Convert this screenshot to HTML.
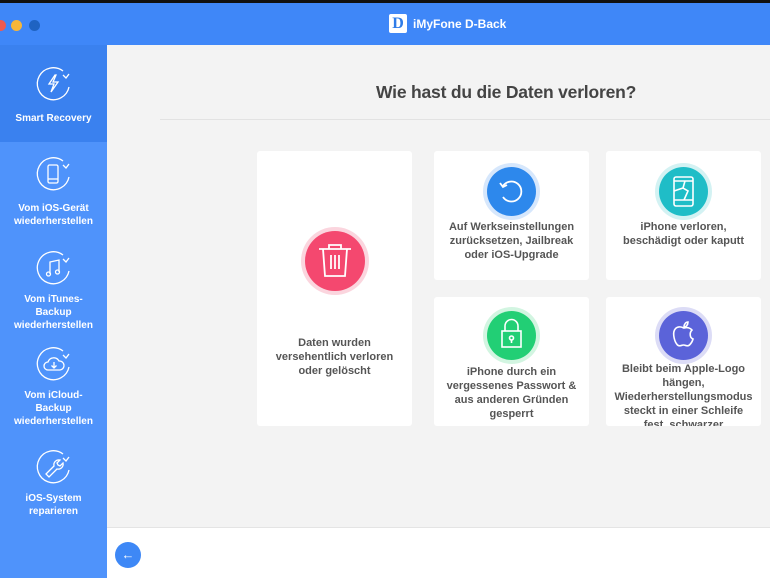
<!DOCTYPE html>
<html><head><meta charset="utf-8"><style>
*{margin:0;padding:0;box-sizing:border-box}
body{width:770px;height:578px;overflow:hidden;background:#f3f3f3;font-family:"Liberation Sans","DejaVu Sans",sans-serif;position:relative}
.top{position:absolute;left:0;top:0;width:770px;height:3px;background:#111}
.bar{position:absolute;left:0;top:3px;width:770px;height:42px;background:#3f87f8}
.dot{position:absolute;top:17px;width:11px;height:11px;border-radius:50%}
.side{position:absolute;left:0;top:45px;width:107px;height:533px;background:#4f93fb}
.sel{position:absolute;left:0;top:0;width:107px;height:97px;background:#3a81ef}
.item{position:absolute;left:0;width:107px;text-align:center;color:#fff;font-size:10px;font-weight:bold;line-height:13px}
.item svg{display:block;margin:0 auto 6px}
.card{position:absolute;background:#fff;border-radius:3px;text-align:center;color:#555;font-size:11px;font-weight:bold;line-height:14px}
.ic{position:absolute;border-radius:50%}
.bottom{position:absolute;left:107px;top:527px;width:663px;height:51px;background:#fff;border-top:1px solid #e4e4e4}
</style></head><body>
<div class="top"></div>
<div class="bar">
<div class="dot" style="left:-5px;background:#f05a50"></div>
<div class="dot" style="left:11px;background:#f6b63a"></div>
<div class="dot" style="left:29px;background:#1f63c2"></div>
<div style="position:absolute;left:389px;top:11px;width:18px;height:19px;background:#fff;border-radius:2px;color:#2f7ce8;font:bold 16px 'Liberation Serif',serif;text-align:center;line-height:19px">D</div>
<div style="position:absolute;left:413px;top:14px;color:#fff;font-size:12px;font-weight:bold">iMyFone D-Back</div>
</div>
<div class="side">
<div class="sel"></div>
<div class="item" style="top:20px"><svg width="38" height="38" viewBox="0 0 38 38" fill="none" stroke="#fff" stroke-width="1.3"><path d="M34 22A16 16 0 1 1 28 6"/><path d="M28 10l3 3 3-4" /><path d="M20 10l-6 9h5l-3 8 7-10h-5l3-7z"/></svg><span style="position:relative;top:3px">Smart Recovery</span></div>
<div class="item" style="top:110px"><svg width="38" height="38" viewBox="0 0 38 38" fill="none" stroke="#fff" stroke-width="1.3"><path d="M34 22A16 16 0 1 1 28 6"/><path d="M28 10l3 3 3-4"/><rect x="13" y="10" width="10" height="18" rx="1.5"/><path d="M13 24h10"/></svg><span style="position:relative;top:3px">Vom iOS-Gerät<br>wiederherstellen</span></div>
<div class="item" style="top:204px"><svg width="38" height="38" viewBox="0 0 38 38" fill="none" stroke="#fff" stroke-width="1.3"><path d="M34 22A16 16 0 1 1 28 6"/><path d="M28 10l3 3 3-4"/><path d="M15 25V13l9-2v12"/><circle cx="13.5" cy="25" r="2"/><circle cx="22.5" cy="23" r="2"/></svg>Vom iTunes-<br>Backup<br>wiederherstellen</div>
<div class="item" style="top:300px"><svg width="38" height="38" viewBox="0 0 38 38" fill="none" stroke="#fff" stroke-width="1.3"><path d="M34 22A16 16 0 1 1 28 6"/><path d="M28 10l3 3 3-4"/><path d="M13 25a4 4 0 0 1 0-8 6 6 0 0 1 11-1 4.5 4.5 0 0 1 1 9z"/><path d="M19 17v6M16.5 20.5l2.5 2.5 2.5-2.5"/></svg>Vom iCloud-<br>Backup<br>wiederherstellen</div>
<div class="item" style="top:403px"><svg width="38" height="38" viewBox="0 0 38 38" fill="none" stroke="#fff" stroke-width="1.3"><path d="M34 22A16 16 0 1 1 28 6"/><path d="M28 10l3 3 3-4"/><path d="M11 26l8-8a5 5 0 0 1 6-6l-3 3 1 2 2 1 3-3a5 5 0 0 1-6 6l-8 8z"/></svg>iOS-System<br>reparieren</div>
</div>
<div style="position:absolute;left:376px;top:82px;color:#444;font-size:17.5px;font-weight:bold;letter-spacing:-0.2px">Wie hast du die Daten verloren?</div>
<div style="position:absolute;left:160px;top:119px;width:610px;height:1px;background:#e2e2e2"></div>

<div class="card" style="left:257px;top:151px;width:155px;height:275px">
<div class="ic" style="left:44px;top:76px;width:68px;height:68px;background:#fbd5de"></div>
<div class="ic" style="left:48px;top:80px;width:60px;height:60px;background:#f4486f"></div>
<svg style="position:absolute;left:60px;top:92px" width="36" height="36" viewBox="0 0 36 36" fill="none" stroke="#fff" stroke-width="1.8"><path d="M2 6h32M12 6V2h12v4M6 6l2 27h20l2-27M14 12v14M18 12v14M22 12v14"/></svg>
<div style="position:absolute;left:0;top:185px;width:155px">Daten wurden<br>versehentlich verloren<br>oder gelöscht</div></div>

<div class="card" style="left:434px;top:151px;width:155px;height:129px">
<div class="ic" style="left:49px;top:12px;width:57px;height:57px;background:#d6e7fc"></div>
<div class="ic" style="left:53px;top:16px;width:49px;height:49px;background:#2d88ec"></div>
<svg style="position:absolute;left:63px;top:26px" width="29" height="29" viewBox="0 0 29 29" fill="none" stroke="#fff" stroke-width="1.8"><path d="M6 9A10 10 0 1 1 6 20"/><path d="M3 6l3 4 4-2"/></svg>
<div style="position:absolute;left:0;top:69px;width:155px">Auf Werkseinstellungen<br>zurücksetzen, Jailbreak<br>oder iOS-Upgrade</div></div>

<div class="card" style="left:606px;top:151px;width:155px;height:129px">
<div class="ic" style="left:49px;top:12px;width:57px;height:57px;background:#d3f2f3"></div>
<div class="ic" style="left:53px;top:16px;width:49px;height:49px;background:#1fbdc7"></div>
<svg style="position:absolute;left:66px;top:24px" width="23" height="33" viewBox="0 0 23 33" fill="none" stroke="#fff" stroke-width="1.6"><rect x="2" y="2" width="19" height="29" rx="2"/><path d="M2 25h19M2 6h19M13 6l-2 7 5 3-4 9M11 13l-9 3"/></svg>
<div style="position:absolute;left:0;top:69px;width:155px">iPhone verloren,<br>beschädigt oder kaputt</div></div>

<div class="card" style="left:434px;top:297px;width:155px;height:129px">
<div class="ic" style="left:49px;top:10px;width:57px;height:57px;background:#d2f5e1"></div>
<div class="ic" style="left:53px;top:14px;width:49px;height:49px;background:#22cf75"></div>
<svg style="position:absolute;left:66px;top:21px" width="23" height="33" viewBox="0 0 23 33" fill="none" stroke="#fff" stroke-width="1.6"><rect x="2" y="13" width="19" height="16"/><path d="M5 13V8a6.5 6.5 0 0 1 13 0v5"/><circle cx="11.5" cy="20" r="2"/><path d="M11.5 22v3"/></svg>
<div style="position:absolute;left:0;top:68px;width:155px">iPhone durch ein<br>vergessenes Passwort &amp;<br>aus anderen Gründen<br>gesperrt</div></div>

<div class="card" style="left:606px;top:297px;width:155px;height:129px;overflow:hidden">
<div class="ic" style="left:49px;top:10px;width:57px;height:57px;background:#dcdcf6"></div>
<div class="ic" style="left:53px;top:14px;width:49px;height:49px;background:#5b63d9"></div>
<svg style="position:absolute;left:64px;top:22px" width="27" height="30" viewBox="0 0 27 30" fill="none" stroke="#fff" stroke-width="1.6"><path d="M13.5 9c-2-1.5-7-2-9 2-2 4 0 12 3 15 2 2 4 0 6 0s4 2 6 0c1.5-1.5 3-4 3.5-6-3-1-4-6-1-9-1.5-2-5-3-7.5-2z"/><path d="M14 8c0-3 2-5 4-5 0 3-2 5-4 5z"/></svg>
<div style="position:absolute;left:0;top:65px;width:155px">Bleibt beim Apple-Logo<br>hängen,<br>Wiederherstellungsmodus<br>steckt in einer Schleife<br>fest, schwarzer</div></div>

<div class="bottom"><div style="position:absolute;left:8px;top:14px;width:26px;height:26px;border-radius:50%;background:#3e88f6;color:#fff;text-align:center;line-height:25px;font-size:13px">←</div></div>
</body></html>
